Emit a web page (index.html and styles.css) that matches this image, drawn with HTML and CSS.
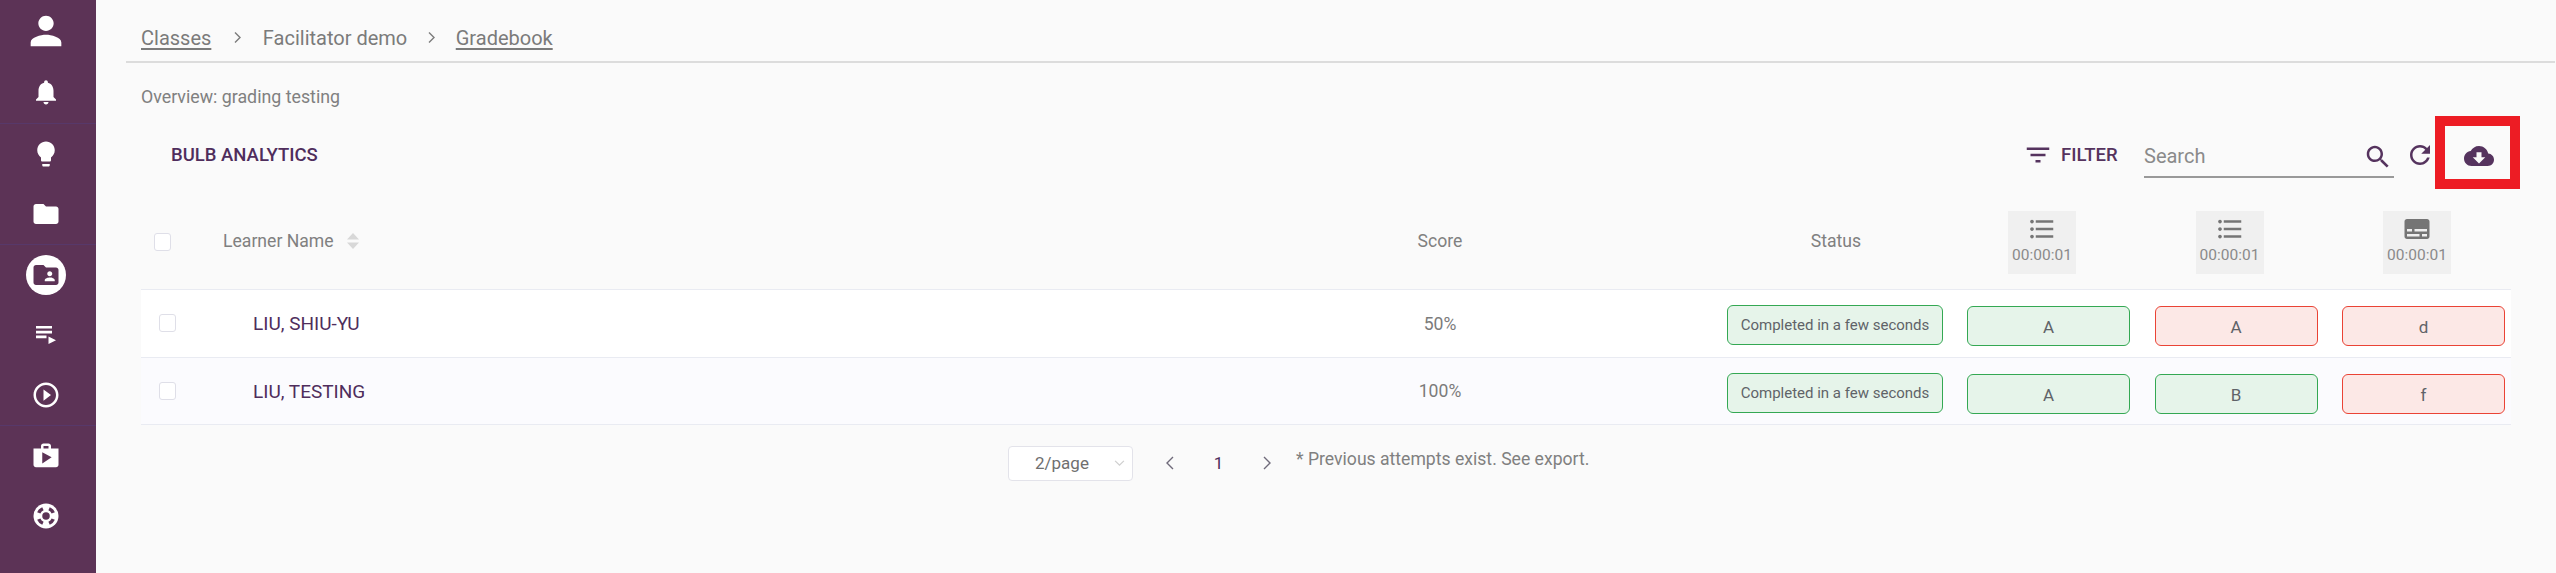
FILE: index.html
```html
<!DOCTYPE html>
<html lang="en">
<head>
<meta charset="utf-8">
<title>Gradebook</title>
<link rel="stylesheet" href="styles.css">
</head>
<body>
<div class="app">
  <nav class="sidebar">
    <div class="nav-group nav-first">
      <div class="nav-item"><svg class="ic-person" viewBox="0 0 24 24"><path d="M12 12c2.21 0 4-1.79 4-4s-1.79-4-4-4-4 1.79-4 4 1.79 4 4 4zm0 2c-2.67 0-8 1.34-8 4v2h16v-2c0-2.66-5.33-4-8-4z"/></svg></div>
      <div class="nav-item"><svg class="ic-nav" viewBox="0 0 24 24"><path d="M12 22c1.1 0 2-.9 2-2h-4c0 1.1.89 2 2 2zm6-6v-5c0-3.07-1.64-5.64-4.5-6.32V4c0-.83-.67-1.5-1.5-1.5s-1.5.67-1.5 1.5v.68C7.63 5.36 6 7.92 6 11v5l-2 2v1h16v-1l-2-2z"/></svg></div>
    </div>
    <div class="nav-group">
      <div class="nav-item"><svg class="ic-nav" viewBox="0 0 24 24"><path d="M9 21c0 .55.45 1 1 1h4c.55 0 1-.45 1-1v-1H9v1zm3-19C8.14 2 5 5.14 5 9c0 2.38 1.19 4.47 3 5.74V17c0 .55.45 1 1 1h6c.55 0 1-.45 1-1v-2.26c1.81-1.27 3-3.36 3-5.74 0-3.86-3.14-7-7-7z"/></svg></div>
      <div class="nav-item"><svg class="ic-nav" viewBox="0 0 24 24"><path d="M10 4H4c-1.1 0-1.99.9-1.99 2L2 18c0 1.1.9 2 2 2h16c1.1 0 2-.9 2-2V8c0-1.1-.9-2-2-2h-8l-2-2z"/></svg></div>
    </div>
    <div class="nav-group">
      <div class="nav-item"><span class="nav-active"><svg class="ic-nav" viewBox="0 0 24 24"><path d="M20 6h-8l-2-2H4c-1.1 0-1.99.9-1.99 2L2 18c0 1.1.9 2 2 2h16c1.1 0 2-.9 2-2V8c0-1.1-.9-2-2-2zm-5 3c1.1 0 2 .9 2 2s-.9 2-2 2-2-.9-2-2 .9-2 2-2zm4 8h-8v-1c0-1.33 2.67-2 4-2s4 .67 4 2v1z"/></svg></span></div>
      <div class="nav-item"><svg class="ic-queue" viewBox="0 0 20 18"><path d="M0 0h16v2.6H0zM0 4.8h16v2.6H0zM0 9.6h10.500v2.600H0zM12.500 10.500v7.500L20 14.200z"/></svg></div>
      <div class="nav-item"><svg class="ic-nav" viewBox="0 0 24 24"><path d="M10 16.500l6-4.500-6-4.500v9zM12 2C6.480 2 2 6.480 2 12s4.480 10 10 10 10-4.480 10-10S17.520 2 12 2zm0 18c-4.410 0-8-3.590-8-8s3.590-8 8-8 8 3.590 8 8-3.590 8-8 8z"/></svg></div>
    </div>
    <div class="nav-group nav-last">
      <div class="nav-item"><svg class="ic-nav" viewBox="0 0 24 24"><path d="M16 6V4c0-1.110-.890-2-2-2h-4c-1.110 0-2 .890-2 2v2H2v13c0 1.110.890 2 2 2h16c1.110 0 2-.890 2-2V6h-6zm-6-2h4v2h-4V4zM9 18V9l7.500 4L9 18z"/></svg></div>
      <div class="nav-item"><svg class="ic-nav" viewBox="0 0 24 24"><circle cx="12" cy="12" r="10"/><circle class="buoy-hole" cx="12" cy="12" r="3"/><path class="buoy-slot" d="M14.460 6.200A6.300 6.300 0 0 1 17.800 9.540M17.800 14.460A6.300 6.300 0 0 1 14.460 17.800M9.540 17.800A6.300 6.300 0 0 1 6.200 14.460M6.200 9.540A6.300 6.300 0 0 1 9.540 6.200"/></svg></div>
    </div>
  </nav>
  <main class="main">
    <div class="crumbs">
      <a class="crumb-link">Classes</a>
      <span class="crumb-sep"><svg class="chev chev-crumb" viewBox="0 0 7 11"><path d="M1 .5l5 5-5 5"/></svg></span>
      <span class="crumb-text">Facilitator demo</span>
      <span class="crumb-sep"><svg class="chev chev-crumb" viewBox="0 0 7 11"><path d="M1 .5l5 5-5 5"/></svg></span>
      <a class="crumb-link">Gradebook</a>
    </div>
    <section class="content">
      <p class="overview">Overview: grading testing</p>
      <div class="toolbar">
        <h2 class="title">BULB ANALYTICS</h2>
        <div class="tools">
          <svg class="ic-tool ic-filter" viewBox="0 0 24 24"><path d="M10 18h4v-2h-4v2zM3 6v2h18V6H3zm3 7h12v-2H6v2z"/></svg>
          <span class="filter-label">FILTER</span>
          <div class="search">
            <span class="search-ph">Search</span>
            <svg class="ic-tool" viewBox="0 0 24 24"><path d="M15.500 14h-.790l-.280-.270C15.410 12.590 16 11.110 16 9.500 16 5.910 13.090 3 9.500 3S3 5.910 3 9.500 5.910 16 9.500 16c1.610 0 3.090-.590 4.230-1.570l.270.280v.790l5 4.990L20.490 19l-4.990-5zm-6 0C7.010 14 5 11.990 5 9.500S7.010 5 9.500 5 14 7.010 14 9.500 11.990 14 9.500 14z"/></svg>
          </div>
          <svg class="ic-tool ic-refresh" viewBox="0 0 24 24"><path d="M17.650 6.350C16.200 4.900 14.210 4 12 4c-4.420 0-7.990 3.580-7.990 8s3.570 8 7.990 8c3.730 0 6.840-2.550 7.730-6h-2.080c-.820 2.330-3.040 4-5.650 4-3.310 0-6-2.690-6-6s2.690-6 6-6c1.660 0 3.140.690 4.220 1.780L13 11h7V4l-2.350 2.350z"/></svg>
          <div class="export"><svg class="ic-tool ic-cloud" viewBox="0 0 24 24"><path d="M19.350 10.040C18.670 6.590 15.640 4 12 4 9.110 4 6.600 5.640 5.350 8.040 2.340 8.360 0 10.910 0 14c0 3.310 2.690 6 6 6h13c2.760 0 5-2.240 5-5 0-2.640-2.050-4.780-4.650-4.960zM17 13l-5 5-5-5h3V9h4v4h3z"/></svg></div>
        </div>
      </div>

      <div class="grid grid-head">
        <div class="head-check"><span class="check"></span></div>
        <div class="head-name">Learner Name <svg class="sort" viewBox="0 0 12 16"><path d="M6 0l6 6.500H0zM6 16L0 9.500h12z"/></svg></div>
        <div class="head-center">Score</div>
        <div class="head-status">Status</div>
        <div class="q-box"><svg class="ic-q" viewBox="0 0 24 24"><path d="M4 10.500c-.830 0-1.500.670-1.500 1.500s.670 1.500 1.500 1.500 1.500-.670 1.500-1.500-.670-1.500-1.500-1.500zm0-6c-.830 0-1.500.670-1.500 1.500S3.170 7.500 4 7.500 5.500 6.830 5.500 6 4.830 4.500 4 4.500zm0 12c-.830 0-1.500.680-1.500 1.500s.680 1.500 1.500 1.500 1.500-.680 1.500-1.500-.670-1.500-1.500-1.500zM7 19h14v-2H7v2zm0-6h14v-2H7v2zm0-8v2h14V5H7z"/></svg><span>00:00:01</span></div>
        <div class="q-box"><svg class="ic-q" viewBox="0 0 24 24"><path d="M4 10.500c-.830 0-1.500.670-1.500 1.500s.670 1.500 1.500 1.500 1.500-.670 1.500-1.500-.670-1.500-1.500-1.500zm0-6c-.830 0-1.500.670-1.500 1.500S3.170 7.500 4 7.500 5.500 6.830 5.500 6 4.830 4.500 4 4.500zm0 12c-.830 0-1.500.680-1.500 1.500s.680 1.500 1.500 1.500 1.500-.680 1.500-1.500-.670-1.500-1.500-1.500zM7 19h14v-2H7v2zm0-6h14v-2H7v2zm0-8v2h14V5H7z"/></svg><span>00:00:01</span></div>
        <div class="q-box"><svg class="ic-q" viewBox="0 0 24 24"><path d="M20 4H4c-1.100 0-2 .900-2 2v12c0 1.100.900 2 2 2h16c1.100 0 2-.900 2-2V6c0-1.100-.900-2-2-2zM4 12h4v2H4v-2zm10 6H4v-2h10v2zm6 0h-4v-2h4v2zm0-4H10v-2h10v2z"/></svg><span>00:00:01</span></div>
      </div>

      <div class="grid row row-white">
        <div class="row-check"><span class="check"></span></div>
        <div class="name">LIU, SHIU-YU</div>
        <div class="score">50%</div>
        <div class="status-cell"><span class="tag tag-status good">Completed in a few seconds</span></div>
        <div class="tag tag-q good">A</div>
        <div class="tag tag-q bad">A</div>
        <div class="tag tag-q bad">d</div>
      </div>
      <div class="grid row row-tint">
        <div class="row-check"><span class="check"></span></div>
        <div class="name">LIU, TESTING</div>
        <div class="score">100%</div>
        <div class="status-cell"><span class="tag tag-status good">Completed in a few seconds</span></div>
        <div class="tag tag-q good">A</div>
        <div class="tag tag-q good">B</div>
        <div class="tag tag-q bad">f</div>
      </div>

      <div class="pager">
        <div class="page-size">2/page<svg class="chev chev-size" viewBox="0 0 12 8"><path d="M1 1l5 5 5-5"/></svg></div>
        <svg class="chev chev-page" viewBox="0 0 8 14"><path d="M7 1L1 7l6 6"/></svg>
        <span class="page-num">1</span>
        <svg class="chev chev-page" viewBox="0 0 8 14"><path d="M1 1l6 6-6 6"/></svg>
        <span class="note">* Previous attempts exist. See export.</span>
      </div>
    </section>
  </main>
</div>
</body>
</html>
```

FILE: styles.css
```css
* { box-sizing: border-box; }
html, body { margin: 0; padding: 0; }
body { background: #fafafa; font-family: Roboto, "Liberation Sans", sans-serif; color: #7b7b7b; }
svg { display: block; fill: currentColor; flex: none; }
.app { display: flex; height: 573px; overflow: hidden; }

.sidebar { width: 96px; flex: none; background: #5c3356; color: #fff; display: flex; flex-direction: column; }
.nav-group { border-bottom: 1px solid #57386a; }
.nav-first .nav-item:first-child { height: 61px; }
.nav-first .nav-item:last-child { height: 62px; }
.nav-last { border-bottom: 0; }
.nav-item { height: 60px; padding-right: 4px; display: flex; align-items: center; justify-content: center; }
.ic-person { width: 46px; height: 46px; }
.ic-nav { width: 30px; height: 30px; }
.ic-queue { width: 20px; height: 18px; }
.nav-active { width: 40px; height: 40px; border-radius: 50%; background: #fff; color: #5c3356; display: flex; align-items: center; justify-content: center; }
.buoy-hole { fill: #5c3356; }
.buoy-slot { fill: none; stroke: #5c3356; stroke-width: 2.800; }

.main { flex: none; width: 2429px; margin-left: 30px; }
.crumbs { height: 63px; border-bottom: 2px solid #dcdcdc; padding: 14px 0 0 15px; display: flex; align-items: center; font-size: 20px; color: #7b7b7b; }
.crumb-link { text-decoration: underline; text-underline-offset: 3px; }
.crumb-sep { width: 51.500px; display: flex; justify-content: center; }
.crumb-text + .crumb-sep { width: 48.500px; }
.chev { fill: none; stroke: currentColor; stroke-width: 1.4; }
.chev-crumb { width: 7px; height: 11px; }

.content { width: 2385px; padding: 0 0 0 15px; }
.overview { margin: 25px 0 0; height: 18px; line-height: 18px; font-size: 17.800px; color: #808080; }
.toolbar { margin-top: 22px; height: 50px; padding: 4px 0 0 30px; display: flex; align-items: center; justify-content: space-between; }
.title { margin: 0; font-size: 18.500px; font-weight: 500; color: #4f2d5c; }
.tools { display: flex; align-items: center; color: #55335e; margin-right: -9px; }
.ic-tool { width: 30px; height: 30px; }
.ic-filter { margin-right: 8px; }
.filter-label { font-size: 18.500px; font-weight: 500; width: 58px; margin-right: 25px; white-space: nowrap; }
.search { width: 250px; height: 46px; border-bottom: 2px solid #999; display: flex; align-items: center; justify-content: space-between; }
.search-ph { font-size: 20px; color: #8a8a8a; margin-top: 4px; }
.search .ic-tool { margin-right: 1px; margin-top: 6px; }
.ic-refresh { margin-left: 11px; }
.export { width: 85px; height: 73px; margin-top: -5px; border: 10px solid #ed1c24; display: flex; align-items: center; justify-content: center; }
.ic-cloud { margin-top: 6px; margin-left: 2px; }

.grid { display: grid; grid-template-columns: 82px 1117px 200px 415px 187.500px 187.500px 181px; align-items: center; width: 2370px; }
.grid-head { height: 78px; margin-top: 33px; font-size: 17.600px; color: #808080; }
.head-check { padding-left: 13px; margin-top: -16px; }
.check { display: block; width: 17px; height: 18px; border: 1px solid #dfdfe8; border-radius: 3px; background: #fff; }
.head-name { display: flex; align-items: center; gap: 9px; margin-top: -18px; white-space: pre; }
.sort { width: 12px; height: 16px; color: #d8d8d8; }
.head-center { text-align: center; margin-top: -18px; }
.head-status { padding-left: 188px; width: 404px; text-align: center; margin-top: -18px; }
.q-box { align-self: start; margin-left: 53px; width: 68px; height: 63px; background: #f0f0f0; display: flex; flex-direction: column; align-items: center; font-size: 15.500px; color: #8a8a8a; padding-top: 3px; }
.ic-q { width: 30px; height: 30px; color: #757575; margin-bottom: 2px; }

.row { height: 68px; border-top: 1px solid #e9ebf2; }
.row-white { background: #fff; }
.row-tint { background: #fbfbfe; border-bottom: 1px solid #e9ebf2; }
.row-check { padding-left: 18px; margin-top: -1px; }
.name { margin-left: 30px; font-size: 19px; color: #4f2d5c; }
.score { text-align: center; font-size: 17.600px; }
.status-cell { padding-left: 187px; margin-top: 3px; }
.tag { display: flex; align-items: center; justify-content: center; border-radius: 6px; border: 1.5px solid; color: #5f6368; }
.tag-status { width: 216px; height: 40px; font-size: 15px; }
.tag-q { width: 163px; height: 40px; margin-left: 12px; margin-top: 5px; font-size: 17px; padding-top: 2px; }
.good { background: #e6f4ea; border-color: #34a853; }
.bad { background: #fce8e6; border-color: #ea4335; }

.pager { display: flex; align-items: center; margin: 20px 0 0 867px; height: 36px; }
.page-size { width: 125px; height: 35px; background: #fff; border: 1px solid #e3e3ea; border-radius: 4px; display: flex; align-items: center; font-size: 17px; color: #6f6f6f; padding-left: 26px; }
.chev-size { width: 11px; height: 7px; color: #cfcfcf; margin-left: 25px; }
.chev-page { width: 8px; height: 14px; color: #6f6a7a; }
.page-size + .chev-page { margin-left: 33px; }
.page-num { font-size: 17px; color: #4f2d5c; width: 89px; text-align: center; }
.note { margin-left: 25px; font-size: 17.600px; color: #808080; margin-top: -8px; }
```
